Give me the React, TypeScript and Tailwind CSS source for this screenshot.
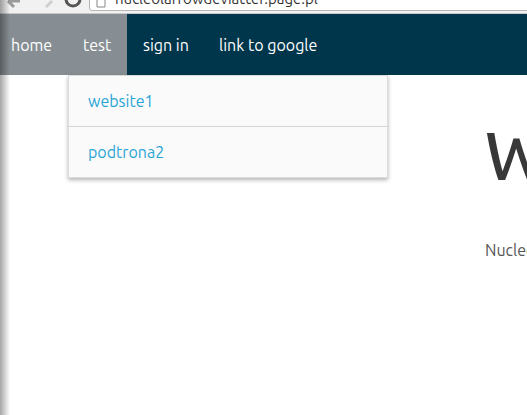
import React from "react";

export default function App() {
  const font = { fontFamily: "Ubuntu, 'Open Sans', 'Noto Sans', sans-serif" };
  return (
    <div className="relative w-[527px] h-[415px] overflow-hidden bg-white" style={font}>
      {/* browser chrome strip */}
      <div className="relative h-[14px] bg-[#f1f1f1] border-b border-[#c8c8c8] flex items-end">
        <div className="flex items-end h-full">
          <svg width="20" height="14" viewBox="0 0 20 14" className="ml-[4px]">
            <path d="M4 2 L10 8 M4 2 L16 2" stroke="#9a9a9a" strokeWidth="3" fill="none" />
          </svg>
          <svg width="20" height="14" viewBox="0 0 20 14" className="ml-[12px]">
            <path d="M16 2 L10 8" stroke="#cfcfcf" strokeWidth="3" fill="none" />
          </svg>
          <svg width="20" height="14" viewBox="0 0 20 14" className="ml-[7px]">
            <path d="M3 0 A7 7 0 0 0 17 0" stroke="#555" strokeWidth="3" fill="none" />
          </svg>
        </div>
        <div className="absolute left-[89px] top-[-10px] right-[-10px] h-[21px] bg-white border border-[#b5b5b5] rounded-[3px] overflow-hidden">
          <div className="flex items-start h-full">
            <svg width="10" height="12" viewBox="0 0 10 12" className="ml-[6px] mt-[5px]">
              <path d="M1 0 V11 H9 V0" stroke="#888" strokeWidth="1" fill="none" />
            </svg>
            <span className="ml-[9px] mt-[-2px] text-[15px] leading-[20px] text-[#333] whitespace-nowrap">
              nucleolarrowdeviatter.page.pl
            </span>
          </div>
        </div>
      </div>

      {/* nav */}
      <nav className="relative h-[61px] bg-[#00364b] flex items-stretch text-white text-[16px]">
        <a className="flex items-center w-[68px] pl-[11px] pt-[1px] bg-[#878e93]">home</a>
        <div className="relative flex">
          <a className="flex items-center w-[59px] pl-[15px] pt-[1px] bg-[#878e93]">test</a>
          <div className="absolute left-0 top-[61px] w-[320px] bg-[#fafafa] border border-[#dcdcdc] shadow-[0_2px_4px_rgba(0,0,0,0.3)] z-10">
            <a className="flex items-center h-[51px] pl-[19px] text-[#2aa5d6] border-b border-[#d4d4d4]">website1</a>
            <a className="flex items-center h-[50px] pl-[19px] text-[#2aa5d6]">podtrona2</a>
          </div>
        </div>
        <a className="flex items-center w-[76px] pl-[16px] pt-[1px]">sign in</a>
        <a className="flex items-center pl-[16px] pr-4 pt-[1px] whitespace-nowrap">link to google</a>
      </nav>

      {/* main */}
      <main className="pl-[485px] pt-[47px] whitespace-nowrap">
        <h1 className="text-[67px] leading-[67px] text-[#383838] font-medium">Welcome</h1>
        <p className="mt-[51px] text-[16px] leading-[20px] text-[#555]">Nucleolar</p>
      </main>

      {/* left edge shadow */}
      <div className="pointer-events-none absolute left-0 top-0 h-full w-[10px] bg-gradient-to-r from-[rgba(0,0,0,0.35)] to-transparent" />
    </div>
  );
}
